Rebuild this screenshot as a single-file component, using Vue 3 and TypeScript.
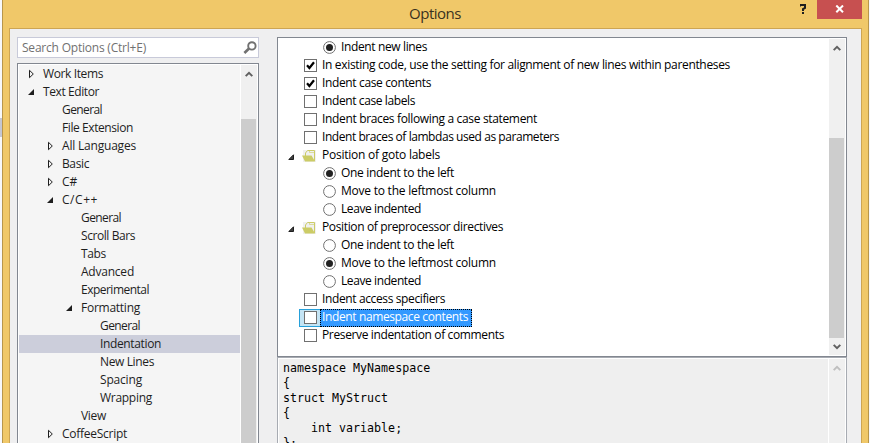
<script setup lang="ts">
type Arrow = 'open' | 'closed' | ''
interface TreeItem { label: string; level: number; arrow: Arrow; width: number }
interface OptionItem { label: string; kind: 'radio' | 'check' | 'group'; on?: boolean; selected?: boolean; width: number }

const t = (label: string, level: number, width: number, arrow: Arrow = ''): TreeItem => ({ label, level, width, arrow })
const tree: TreeItem[] = [
  t('Work Items', 0, 60, 'closed'),
  t('Text Editor', 0, 56, 'open'),
  t('General', 1, 40),
  t('File Extension', 1, 71),
  t('All Languages', 1, 74, 'closed'),
  t('Basic', 1, 27, 'closed'),
  t('C#', 1, 15, 'closed'),
  t('C/C++', 1, 36, 'open'),
  t('General', 2, 40),
  t('Scroll Bars', 2, 54),
  t('Tabs', 2, 25),
  t('Advanced', 2, 53),
  t('Experimental', 2, 68),
  t('Formatting', 2, 59, 'open'),
  t('General', 3, 40),
  t('Indentation', 3, 61),
  t('New Lines', 3, 54),
  t('Spacing', 3, 42),
  t('Wrapping', 3, 52),
  t('View', 2, 25),
  t('CoffeeScript', 1, 65, 'closed'),
]
const options: OptionItem[] = [
  { label: 'Indent new lines', kind: 'radio', on: true, width: 86 },
  { label: 'In existing code, use the setting for alignment of new lines within parentheses', kind: 'check', on: true, width: 408 },
  { label: 'Indent case contents', kind: 'check', on: true, width: 109 },
  { label: 'Indent case labels', kind: 'check', width: 93 },
  { label: 'Indent braces following a case statement', kind: 'check', width: 215 },
  { label: 'Indent braces of lambdas used as parameters', kind: 'check', width: 237 },
  { label: 'Position of goto labels', kind: 'group', width: 118 },
  { label: 'One indent to the left', kind: 'radio', on: true, width: 113 },
  { label: 'Move to the leftmost column', kind: 'radio', width: 155 },
  { label: 'Leave indented', kind: 'radio', width: 80 },
  { label: 'Position of preprocessor directives', kind: 'group', width: 181 },
  { label: 'One indent to the left', kind: 'radio', width: 113 },
  { label: 'Move to the leftmost column', kind: 'radio', on: true, width: 155 },
  { label: 'Leave indented', kind: 'radio', width: 80 },
  { label: 'Indent access specifiers', kind: 'check', width: 123 },
  { label: 'Indent namespace contents', kind: 'check', selected: true, width: 146 },
  { label: 'Preserve indentation of comments', kind: 'check', width: 182 },
]
const code = 'namespace MyNamespace\n{\nstruct MyStruct\n{\n    int variable;\n};'

const vFit = {
  mounted(el: HTMLElement, binding: { value: number }) {
    const natural = el.getBoundingClientRect().width
    const count = el.textContent?.length ?? 1
    el.style.letterSpacing = `${(binding.value - natural) / count}px`
  },
}
</script>

<template>
  <div class="desktop">
    <div class="backdrop"><div class="backdrop-bar"></div></div>
    <div class="window">
      <header class="titlebar">
        <h1><span v-fit="52">Options</span></h1>
        <svg class="help" width="6" height="10" viewBox="0 0 6 10"><path d="M0 2.6V1H5V3.9L3 5V7M3 8V10" /></svg>
        <div class="close">
          <svg width="10" height="8" viewBox="0 0 10 8"><path d="M1.3 .5L8 7.3M8 .5L1.3 7.3" /></svg>
        </div>
      </header>
      <main class="content">
        <aside class="sidebar">
          <div class="search">
            <span v-fit="124">Search Options (Ctrl+E)</span>
            <svg width="14" height="13" viewBox="0 0 14 13"><circle cx="8.9" cy="4.9" r="3.7" /><path class="handle" d="M6 7.6L1.4 11.9" /></svg>
          </div>
          <div class="tree">
            <div class="rows">
              <div v-for="(item, i) in tree" :key="i" class="row" :class="['level' + item.level, { active: item.label === 'Indentation' }]">
                <svg class="arrow" width="7" height="10" viewBox="0 0 7 10">
                  <path v-if="item.arrow === 'closed'" class="closed" d="M1.5 1.3V8.7L5.3 5Z" />
                  <path v-if="item.arrow === 'open'" class="open" d="M6 2V8H0Z" />
                </svg>
                <span v-fit="item.width">{{ item.label }}</span>
              </div>
            </div>
            <div class="scrollbar tree-scroll">
              <div class="scroll-button"><svg width="8" height="6" viewBox="0 0 8 6"><path d="M.7 5.1L4 1.8L7.3 5.1" /></svg></div>
              <div class="thumb"></div>
            </div>
          </div>
        </aside>
        <section class="details">
          <div class="options">
            <div class="option-list">
              <div v-for="(item, i) in options" :key="i" class="option" :class="[item.kind, { selected: item.selected }]">
                <svg v-if="item.kind === 'group'" class="group-arrow" width="7" height="7" viewBox="0 0 7 7"><path d="M5.5 .8V5.5H.8Z" /></svg>
                <svg v-if="item.kind === 'group'" class="folder" width="14" height="12" viewBox="0 0 14 12">
                  <rect x="1" width="13" height="12" fill="#f0f0f0" /><path d="M3.5 6V3L5.5 .5H12.5V11" fill="none" stroke="#cccc66" />
                  <path d="M7.5 .5V2.5H12.5" fill="none" stroke="#cccc66" stroke-width=".6" />
                  <path d="M0 5.5H9.5L13 11.5H3Z" fill="#cccc66" />
                </svg>
                <svg v-else-if="item.kind === 'radio'" class="mark" width="13" height="13" viewBox="0 0 13 13">
                  <circle cx="6.5" cy="6.5" r="5.9" fill="#fff" stroke="#707070" /><circle v-if="item.on" cx="6.5" cy="6.5" r="3.5" fill="#212121" />
                </svg>
                <div v-else class="mark-cell">
                  <svg class="mark" width="13" height="13" viewBox="0 0 13 13">
                    <rect x=".5" y=".5" width="12" height="12" fill="#fff" stroke="#707070" />
                    <path v-if="item.on" d="M3 6.2L5.4 9L10 3.2" fill="none" stroke="#000" stroke-width="2.2" />
                  </svg>
                </div>
                <div class="label"><span v-fit="item.width">{{ item.label }}</span></div>
              </div>
            </div>
            <div class="scrollbar option-scroll">
              <div class="scroll-button"><svg width="8" height="6" viewBox="0 0 8 6"><path d="M.7 5.1L4 1.8L7.3 5.1" /></svg></div>
              <div class="thumb"></div>
              <div class="scroll-button down"><svg width="8" height="6" viewBox="0 0 8 6"><path d="M.7 .9L4 4.2L7.3 .9" /></svg></div>
            </div>
          </div>
          <div class="preview">
            <pre>{{ code }}</pre>
            <div class="scrollbar preview-scroll">
              <div class="scroll-button"><svg width="8" height="6" viewBox="0 0 8 6"><path d="M.7 5.1L4 1.8L7.3 5.1" /></svg></div>
            </div>
          </div>
        </section>
      </main>
    </div>
  </div>
</template>

<style>
body { overflow: hidden; }
</style>

<style scoped>
* { box-sizing: border-box; }
svg { display: block; flex: none; }
.desktop { width: 870px; height: 443px; display: flex; overflow: hidden; background: #f7f8fb; font: 12px/18px "Open Sans", "Noto Sans", sans-serif; color: #1e1e1e; white-space: nowrap; }
.backdrop { width: 2px; padding-top: 118px; }
.backdrop-bar { height: 19px; background: #c4c6d2; }
.window { width: 867px; height: 443px; background: #f0c869; border: solid #b8964b; border-width: 0 1px; display: flex; flex-direction: column; padding: 0 6px; }
.titlebar { height: 28px; display: flex; align-items: flex-start; flex: none; }
h1 { margin: 0; font-size: 15px; font-weight: 400; line-height: 26px; width: 391px; padding-left: 0; margin-left: 400px; color: #3a3220; }
.help { margin-top: 4px; fill: none; stroke: #1e1e1e; stroke-width: 2; }
.close { margin-left: 11px; width: 45px; height: 19px; padding: 5px 0 0 18px; background: #c75050; flex: none; }
.close path { stroke: #fff; stroke-width: 2; fill: none; }
.content { flex: 1; border: 1px solid #cda553; border-bottom: 0; background: #efeff0; display: flex; padding: 8px 14px 0 7px; gap: 18px; min-height: 0; }
.sidebar { width: 242px; display: flex; flex-direction: column; gap: 5px; }
.search { height: 21px; flex: none; background: #fff; border: 1px solid #c8cad9; display: flex; align-items: center; justify-content: space-between; padding: 0 1px 0 4px; color: #717171; }
.search span { padding-top: 1px; }
.search svg { margin-top: -1px; fill: none; stroke: #717171; stroke-width: 1.9; }
.search .handle { stroke-width: 2.7; }
.tree { height: 381px; border: 1px solid #828790; border-bottom: 0; background: #fff; padding: 1px 1px 0; display: flex; }
.rows { flex: 1; background: #f5f5f5; overflow: hidden; }
.row { height: 18px; display: flex; align-items: flex-start; line-height: 17px; }
.level0 { padding-left: 9px; }
.level1 { padding-left: 28px; }
.level2 { padding-left: 47px; }
.level3 { padding-left: 66px; }
.arrow { margin: 4px 8px 0 0; }
.closed { fill: none; stroke: #1e1e1e; }
.open { fill: #1e1e1e; }
.row.active { background: #cccedb; }
.scrollbar { width: 16px; background: #f0f0f0; flex: none; }
.tree-scroll { width: 17px; border-left: 1px solid #fff; }
.scroll-button { height: 17px; display: flex; justify-content: center; padding-top: 6px; }
.scroll-button path { fill: none; stroke: #606060; stroke-width: 2; }
.thumb { background: #cdcdcd; width: 15px; }
.tree-scroll .thumb { margin-top: 37px; height: 324px; }
.details { width: 570px; color: #000; }
.options { height: 320px; border: 1px solid #828790; background: #fff; display: flex; justify-content: space-between; padding: 1px; }
.option { height: 18px; display: flex; align-items: flex-start; }
.radio { padding-left: 44px; }
.radio .mark { margin: 2px 3px 0 0; }
.group { padding-left: 9px; }
.group-arrow { margin: 7px 7px 0 0; fill: #404040; stroke: #1e1e1e; }
.folder { margin: 3px 4px 0 0; }
.check { padding-left: 20px; }
.mark-cell { width: 21px; height: 18px; padding: 2px 0 0 5px; border: 0 solid #26a0da; }
.label { padding: 0 2px; height: 18px; line-height: 15px; }
.selected .mark-cell { background: #c4e4f4; border-width: 1px 0 1px 1px; padding: 1px 0 0 4px; }
.selected .label { background: #3399ff; color: #fff; border: 1px dotted #000; line-height: 13px; padding: 0 3px 0 1px; }
.option-scroll .thumb { margin-top: 82px; height: 200px; }
.down { padding-top: 6px; }
.preview { height: 86px; border: 1px solid #a7abb2; border-bottom: 0; background: #efefef; display: flex; justify-content: space-between; padding: 1px 1px 0; box-shadow: inset 0 1px #fff, inset 1px 0 #fff, inset -1px 0 #fff; }
pre { margin: 2px 0 0 4px; font: 11.65px/15px "DejaVu Sans Mono", "Liberation Mono", monospace; }
.preview-scroll { width: 17px; border-left: 1px solid #fff; }
.preview-scroll path { stroke: #bfbfbf; }
</style>
